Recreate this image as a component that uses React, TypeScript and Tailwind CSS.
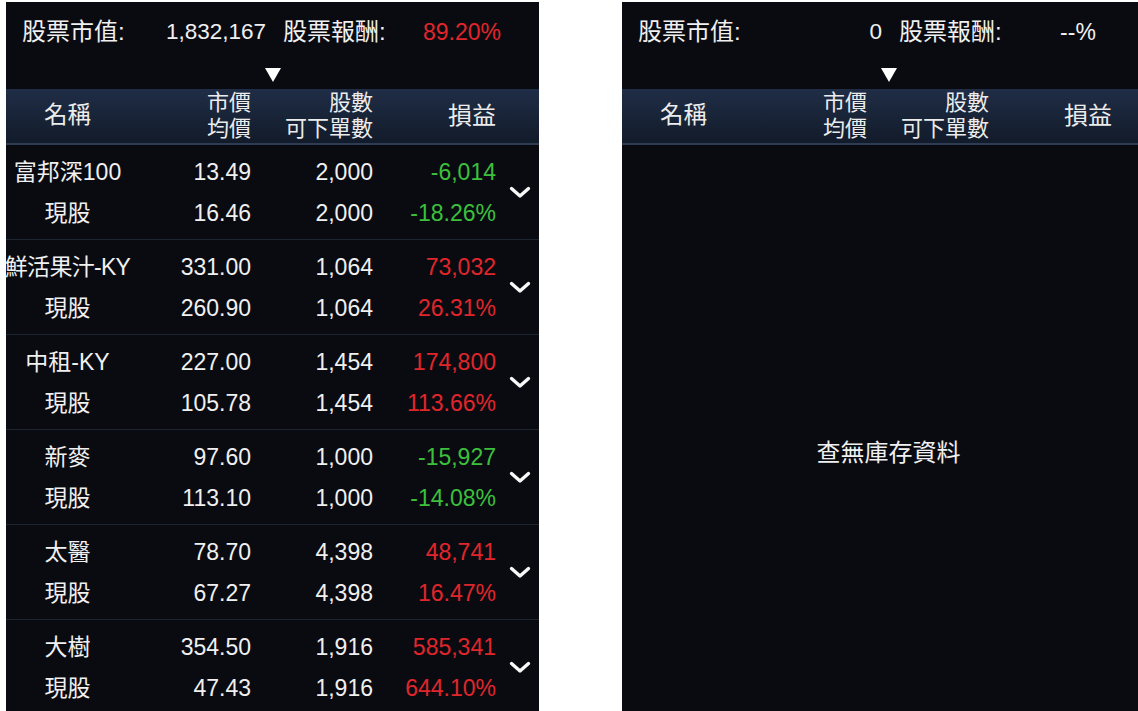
import React from "react";

type Row = {
  name: string;
  price: string;
  avg: string;
  qty: string;
  avail: string;
  pnl: string;
  pct: string;
  up: boolean;
};

const rows: Row[] = [
  { name: "富邦深100", price: "13.49", avg: "16.46", qty: "2,000", avail: "2,000", pnl: "-6,014", pct: "-18.26%", up: false },
  { name: "鮮活果汁-KY", price: "331.00", avg: "260.90", qty: "1,064", avail: "1,064", pnl: "73,032", pct: "26.31%", up: true },
  { name: "中租-KY", price: "227.00", avg: "105.78", qty: "1,454", avail: "1,454", pnl: "174,800", pct: "113.66%", up: true },
  { name: "新麥", price: "97.60", avg: "113.10", qty: "1,000", avail: "1,000", pnl: "-15,927", pct: "-14.08%", up: false },
  { name: "太醫", price: "78.70", avg: "67.27", qty: "4,398", avail: "4,398", pnl: "48,741", pct: "16.47%", up: true },
  { name: "大樹", price: "354.50", avg: "47.43", qty: "1,916", avail: "1,916", pnl: "585,341", pct: "644.10%", up: true },
];

function Chevron() {
  return (
    <svg width="22" height="13" viewBox="0 0 22 13" fill="none">
      <path d="M2.5 2.5 L11 10 L19.5 2.5" stroke="#f7f7f7" strokeWidth="3.4" strokeLinecap="round" strokeLinejoin="round" />
    </svg>
  );
}

function Summary({ value, ret, retRed }: { value: string; ret: string; retRed: boolean }) {
  return (
    <div className="h-[87px] flex flex-col">
      <div className="mt-[16px] h-[28px] flex items-center text-[#f0f0f0]">
        <div className="w-[16px] shrink-0" />
        <div className="w-[134px] shrink-0 text-[24px] leading-[28px] whitespace-nowrap">股票市值:</div>
        <div className="w-[110px] shrink-0 text-right text-[22.5px] leading-[28px]">{value}</div>
        <div className="w-[17px] shrink-0" />
        <div className="w-[120px] shrink-0 text-[24px] leading-[28px] whitespace-nowrap">股票報酬:</div>
        <div className={"w-[118px] shrink-0 text-center text-[23px] leading-[28px] " + (retRed ? "text-[#e0262b]" : "text-[#f0f0f0]")}>
          {ret}
        </div>
      </div>
      <div className="mt-[22px] flex justify-center">
        <svg width="16" height="14" viewBox="0 0 16 14">
          <polygon points="0,0 16,0 8,14" fill="#ffffff" />
        </svg>
      </div>
    </div>
  );
}

function Header() {
  return (
    <div className="h-[56px] bg-gradient-to-b from-[#1f2d46] to-[#121b2a] border-b-2 border-[#2d3c52] grid grid-cols-[123px_122px_122px_123px_1fr] text-[#ececec]">
      <div className="flex items-center justify-center text-[23.5px]">名稱</div>
      <div className="flex flex-col items-end pt-[1px] text-[22px] leading-[26px]">
        <div>市價</div>
        <div>均價</div>
      </div>
      <div className="flex flex-col items-end pt-[1px] text-[22px] leading-[26px]">
        <div>股數</div>
        <div className="whitespace-nowrap">可下單數</div>
      </div>
      <div className="flex items-center justify-end text-[24px]">損益</div>
      <div />
    </div>
  );
}

function StockRow({ r }: { r: Row }) {
  const color = r.up ? "text-[#e0262b]" : "text-[#3cc03c]";
  const nameTrack = r.name.length > 6 ? "tracking-[-0.7px]" : "";
  return (
    <div className="h-[95px] border-b border-[#1c2530] grid grid-cols-[123px_122px_122px_123px_1fr] text-[23px] text-[#f0f0f0]">
      <div className="flex flex-col pt-[7px]">
        <div className={"h-[41px] flex items-center justify-center whitespace-nowrap " + nameTrack}>{r.name}</div>
        <div className="h-[41px] flex items-center justify-center">現股</div>
      </div>
      <div className="flex flex-col items-end pt-[7px]">
        <div className="h-[41px] flex items-center">{r.price}</div>
        <div className="h-[41px] flex items-center">{r.avg}</div>
      </div>
      <div className="flex flex-col items-end pt-[7px]">
        <div className="h-[41px] flex items-center">{r.qty}</div>
        <div className="h-[41px] flex items-center">{r.avail}</div>
      </div>
      <div className={"flex flex-col items-end pt-[7px] " + color}>
        <div className="h-[41px] flex items-center whitespace-nowrap">{r.pnl}</div>
        <div className="h-[41px] flex items-center whitespace-nowrap">{r.pct}</div>
      </div>
      <div className="flex items-center justify-center pl-[4px]">
        <Chevron />
      </div>
    </div>
  );
}

export default function App() {
  return (
    <div className="w-[1138px] h-[711px] overflow-hidden bg-white flex pt-[2px] font-['Liberation_Sans','Noto_Sans_CJK_TC',sans-serif]">
      <div className="ml-[6px] w-[533px] shrink-0 bg-[#0a0b11] overflow-hidden">
        <Summary value="1,832,167" ret="89.20%" retRed={true} />
        <Header />
        {rows.map((r) => (
          <StockRow key={r.name} r={r} />
        ))}
      </div>
      <div className="ml-[83px] w-[533px] shrink-0 bg-[#0a0b11] overflow-hidden">
        <Summary value="0" ret="--%" retRed={false} />
        <Header />
        <div className="pt-[296px] text-center text-[24px] leading-[24px] text-[#f0f0f0]">查無庫存資料</div>
      </div>
    </div>
  );
}
